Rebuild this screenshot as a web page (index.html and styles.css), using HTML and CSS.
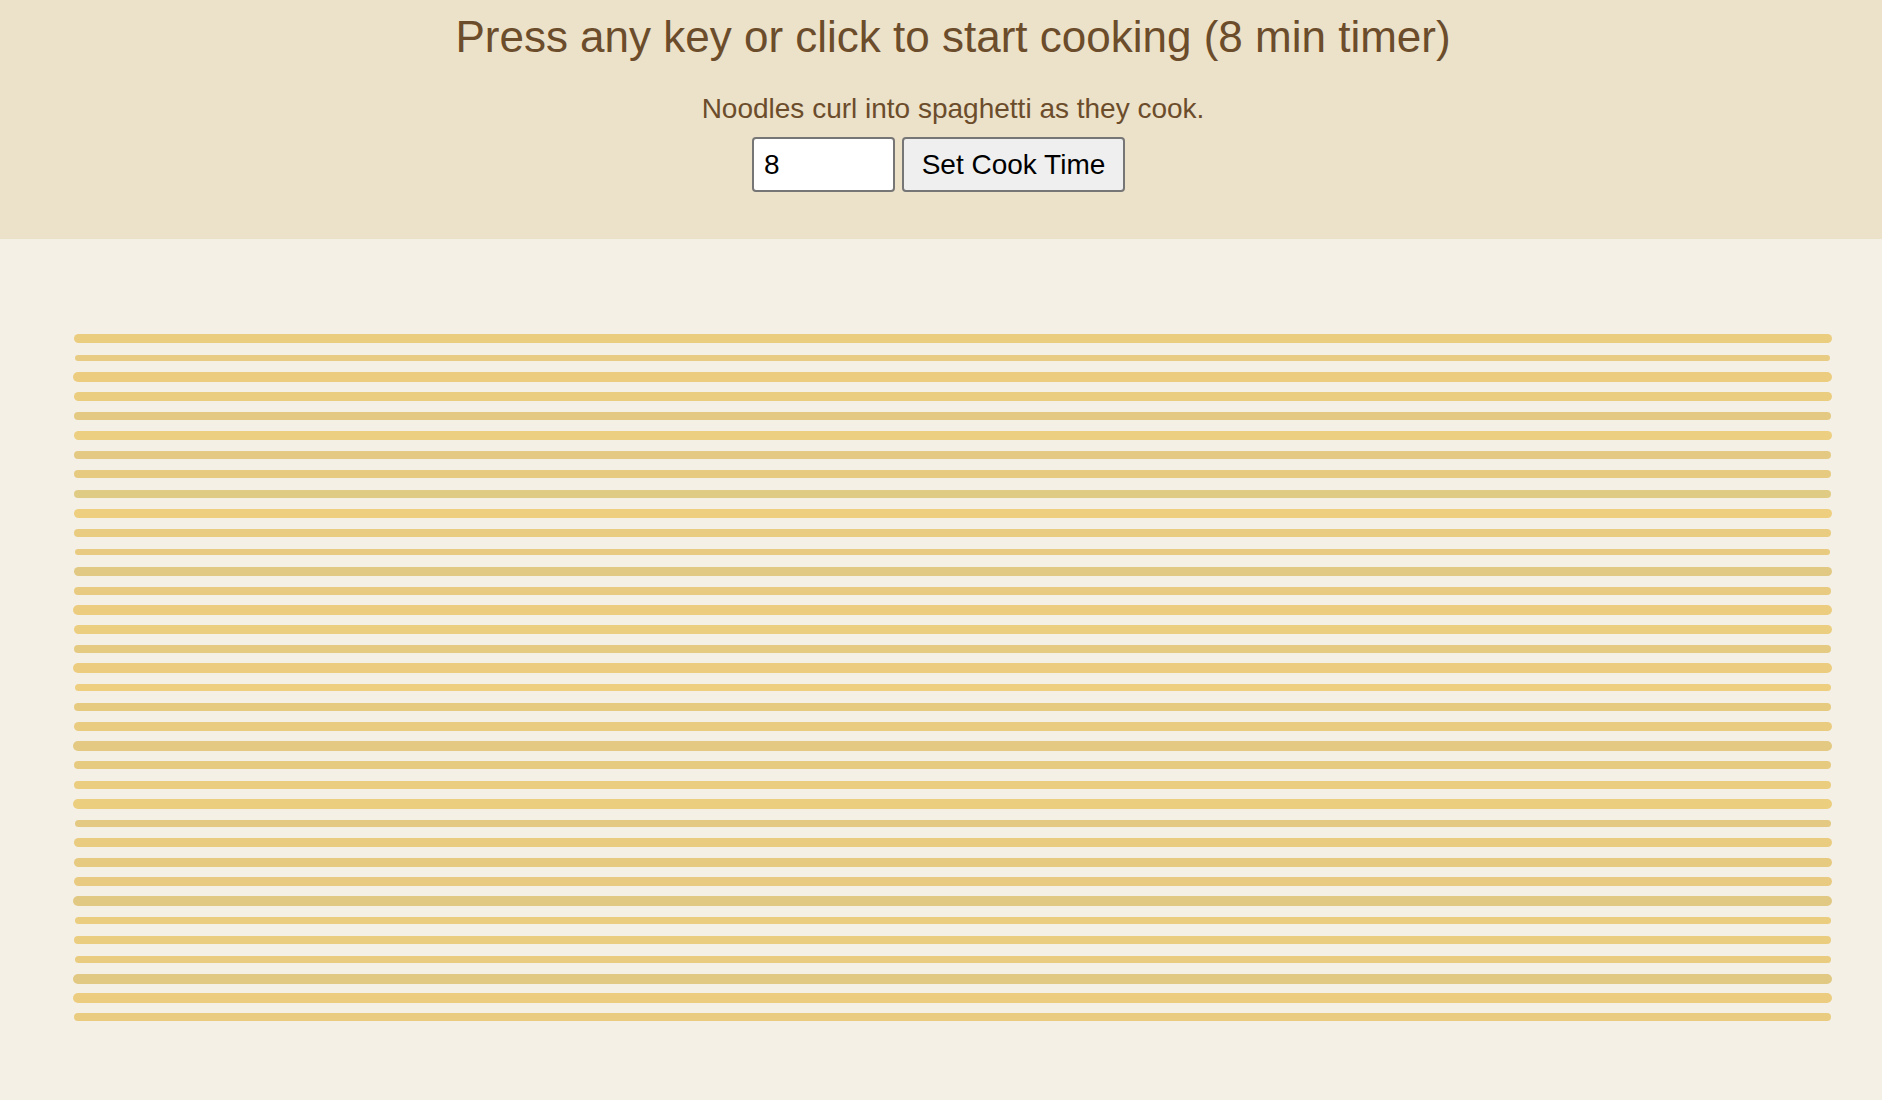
FILE: index.html
```html
<!DOCTYPE html>
<html>
<head>
<meta charset="utf-8">
<link rel="stylesheet" href="styles.css">
</head>
<body>
<header class="top">
  <h1 class="title">Press any key or click to start cooking (8 min timer)</h1>
  <p class="sub">Noodles curl into spaghetti as they cook.</p>
  <div class="controls">
    <input class="minutes" type="text" value="8">
    <button class="set">Set Cook Time</button>
  </div>
</header>
<main class="pot">
  <div class="noodles">
    <div class="row"><div class="noodle" style="--w:9px;--c:#ebcd80"></div></div>
    <div class="row"><div class="noodle" style="--w:6px;--c:#e8cc84"></div></div>
    <div class="row"><div class="noodle" style="--w:10px;--c:#eccd80"></div></div>
    <div class="row"><div class="noodle" style="--w:9px;--c:#ebcd7f"></div></div>
    <div class="row"><div class="noodle" style="--w:8px;--c:#e4c982"></div></div>
    <div class="row"><div class="noodle" style="--w:9px;--c:#eccf80"></div></div>
    <div class="row"><div class="noodle" style="--w:8px;--c:#e4c982"></div></div>
    <div class="row"><div class="noodle" style="--w:8px;--c:#e6ca80"></div></div>
    <div class="row"><div class="noodle" style="--w:8px;--c:#e0cb85"></div></div>
    <div class="row"><div class="noodle" style="--w:9px;--c:#eecf7f"></div></div>
    <div class="row"><div class="noodle" style="--w:8px;--c:#e9cc80"></div></div>
    <div class="row"><div class="noodle" style="--w:6px;--c:#e8cb80"></div></div>
    <div class="row"><div class="noodle" style="--w:9px;--c:#e1c984"></div></div>
    <div class="row"><div class="noodle" style="--w:8px;--c:#e8cb80"></div></div>
    <div class="row"><div class="noodle" style="--w:10px;--c:#eccd80"></div></div>
    <div class="row"><div class="noodle" style="--w:9px;--c:#ebce7f"></div></div>
    <div class="row"><div class="noodle" style="--w:8px;--c:#e5ca82"></div></div>
    <div class="row"><div class="noodle" style="--w:10px;--c:#eccd80"></div></div>
    <div class="row"><div class="noodle" style="--w:7px;--c:#edcf7f"></div></div>
    <div class="row"><div class="noodle" style="--w:8px;--c:#e6ca80"></div></div>
    <div class="row"><div class="noodle" style="--w:9px;--c:#e9cc80"></div></div>
    <div class="row"><div class="noodle" style="--w:10px;--c:#e3c982"></div></div>
    <div class="row"><div class="noodle" style="--w:8px;--c:#e6ca80"></div></div>
    <div class="row"><div class="noodle" style="--w:8px;--c:#ebcd80"></div></div>
    <div class="row"><div class="noodle" style="--w:10px;--c:#ecce7f"></div></div>
    <div class="row"><div class="noodle" style="--w:7px;--c:#e4c982"></div></div>
    <div class="row"><div class="noodle" style="--w:9px;--c:#e9cc80"></div></div>
    <div class="row"><div class="noodle" style="--w:9px;--c:#e6ca80"></div></div>
    <div class="row"><div class="noodle" style="--w:9px;--c:#e8cb80"></div></div>
    <div class="row"><div class="noodle" style="--w:10px;--c:#e1c984"></div></div>
    <div class="row"><div class="noodle" style="--w:7px;--c:#ebcd80"></div></div>
    <div class="row"><div class="noodle" style="--w:8px;--c:#ebcd80"></div></div>
    <div class="row"><div class="noodle" style="--w:7px;--c:#e9cc80"></div></div>
    <div class="row"><div class="noodle" style="--w:10px;--c:#e1c984"></div></div>
    <div class="row"><div class="noodle" style="--w:10px;--c:#eccd80"></div></div>
    <div class="row"><div class="noodle" style="--w:8px;--c:#e9cc80"></div></div>
  </div>
</main>
</body>
</html>
```

FILE: styles.css
```css
html, body {
  margin: 0;
  padding: 0;
}
body {
  background: #f5f0e6;
  font-family: "Liberation Sans", Arial, Helvetica, sans-serif;
  min-height: 1100px;
}
.top {
  background: #ece1c9;
  text-align: center;
  padding: 12px 0 0;
  height: 239px;
  box-sizing: border-box;
}
.title {
  margin: 0;
  padding-left: 24px;
  font-size: 44px;
  line-height: 50px;
  font-weight: 400;
  color: #6b4c2b;
}
.sub {
  margin: 31px 0 0;
  padding-left: 24px;
  font-size: 28px;
  line-height: 32px;
  color: #6b4c2b;
}
.controls {
  margin-top: 12px;
  padding-right: 5px;
  display: flex;
  justify-content: center;
  gap: 7px;
}
.minutes {
  width: 143px;
  height: 55px;
  box-sizing: border-box;
  border: 2px solid #767676;
  border-radius: 4px;
  background: #fff;
  font-family: "Liberation Sans", Arial, sans-serif;
  font-size: 28px;
  padding: 0 10px;
  color: #000;
}
.set {
  width: 223px;
  height: 55px;
  box-sizing: border-box;
  border: 2px solid #767676;
  border-radius: 4px;
  background: #efefef;
  font-family: "Liberation Sans", Arial, sans-serif;
  font-size: 28px;
  color: #000;
  padding: 0;
}
.pot {
  padding: 90px 55px 0 78px;
}
.noodles {
  display: grid;
  grid-auto-rows: 19.4px;
}
.row {
  display: flex;
  align-items: center;
}
.noodle {
  flex: 1;
  height: var(--w);
  margin: 0 calc(var(--w) / -2);
  background: var(--c);
  border-radius: 999px;
}
```
